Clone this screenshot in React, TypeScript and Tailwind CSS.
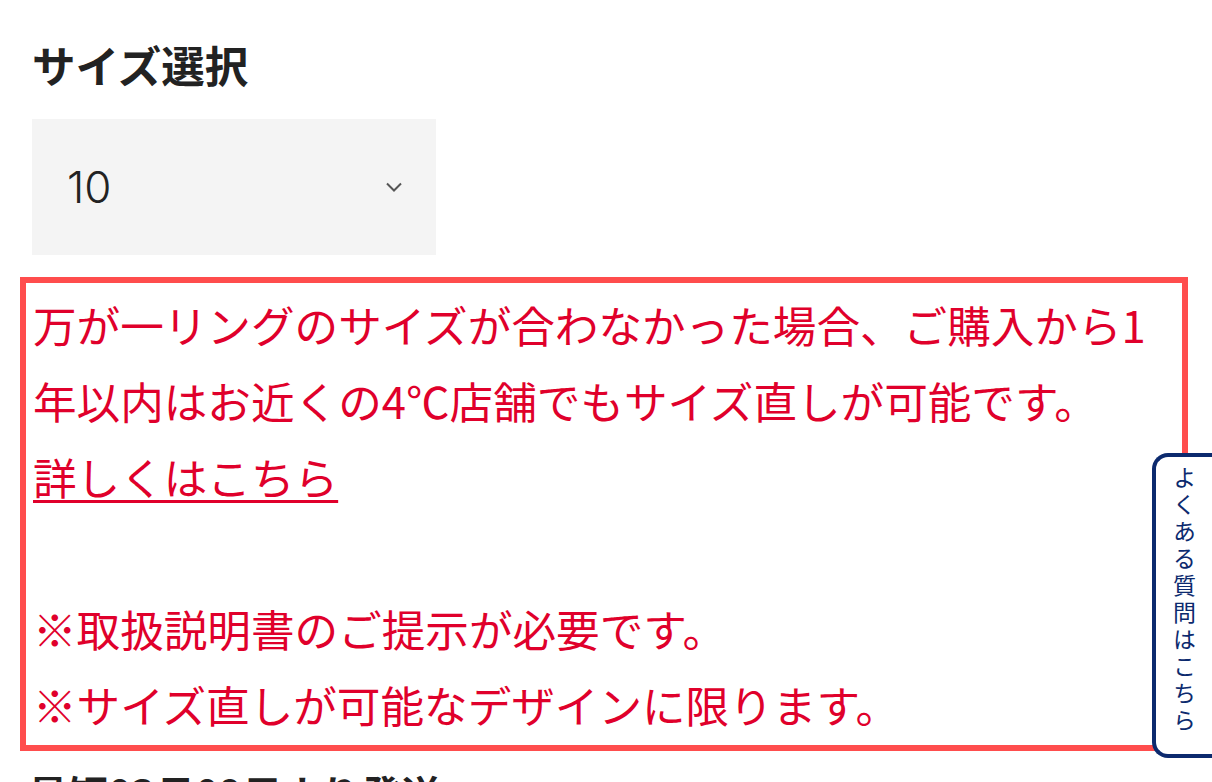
import React from "react";

const jp = { fontFamily: '"Noto Sans CJK JP", "Noto Sans", sans-serif' };

export default function App() {
  return (
    <div
      className="relative h-screen w-full overflow-hidden bg-white pt-[33px] pl-[20px] pr-[24px]"
      style={jp}
    >
      <h2 className="pl-[12px] text-[43.5px] leading-[64px] font-bold text-[#222222]">
        サイズ選択
      </h2>

      <div className="mt-[22px] ml-[12px] flex h-[136px] w-[404px] items-center justify-between bg-[#f4f4f4] pl-[35px] pr-[34px]">
        <span
          className="text-[44px] font-light leading-none text-[#222222]"
          style={{ fontFamily: 'Inter, "Noto Sans", sans-serif' }}
        >
          10
        </span>
        <svg width="16" height="10" viewBox="0 0 16 10" fill="none">
          <path d="M1 1.5 L8 8.5 L15 1.5" stroke="#555555" strokeWidth="2" />
        </svg>
      </div>

      <div className="mt-[22px] border-[6px] border-[#ff4d4d] py-[3px] pl-[7px] pr-[10px] text-[43.6px] leading-[76px] text-[#e0002b]">
        <p>
          万が一リングのサイズが合わなかった場合、ご購入から1
          <br />
          年以内はお近くの4℃店舗でもサイズ直しが可能です。
        </p>
        <p>
          <a href="#" className="underline decoration-[3px] underline-offset-[5px]">
            詳しくはこちら
          </a>
        </p>
        <p>&nbsp;</p>
        <p>※取扱説明書のご提示が必要です。</p>
        <p>※サイズ直しが可能なデザインに限ります。</p>
      </div>

      <p className="mt-[12px] pl-[8px] text-[40px] leading-[60px] font-bold text-[#222222]">
        最短03月09日より発送
      </p>

      <a
        href="#"
        className="absolute top-[453px] right-0 flex h-[305px] w-[60px] justify-center rounded-l-[16px] border-[4px] border-r-0 border-[#0c2a6e] bg-white pt-[9px]"
      >
        <span
          className="text-[23px] leading-none tracking-[4px] text-[#0c2a6e]"
          style={{ writingMode: "vertical-rl" }}
        >
          よくある質問はこちら
        </span>
      </a>
    </div>
  );
}
